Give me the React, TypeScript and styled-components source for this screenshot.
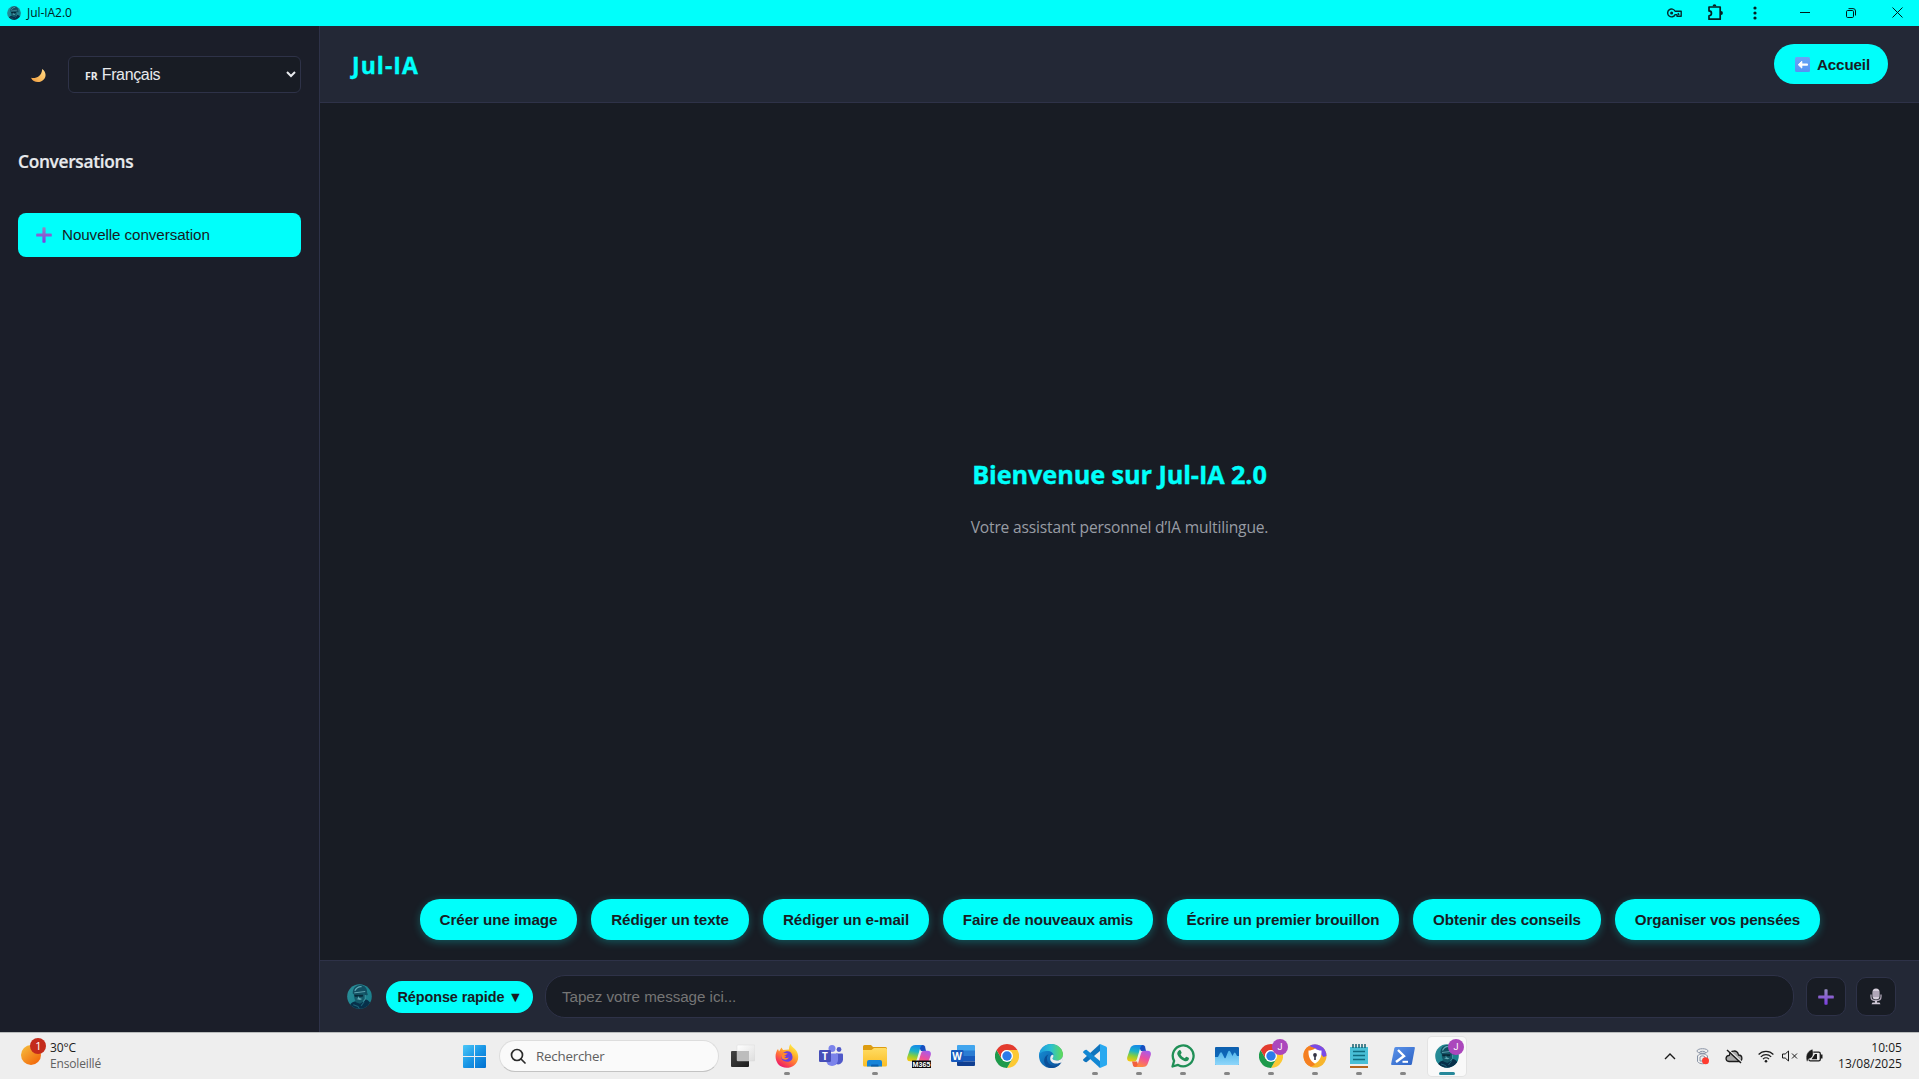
import React from "react";
import styled, { createGlobalStyle } from "styled-components";

const CYAN = "#00fffb";
const INK = "#181c24";
const PANEL = "#232836";
const SIDE = "#1b1e29";
const LINE = "#2e3248";
const UI = '"Open Sans", "Noto Sans", sans-serif';
const ARIAL = '"Liberation Sans", Arial, sans-serif';

const Global = createGlobalStyle`
  * { box-sizing: border-box; }
  html, body { margin: 0; padding: 0; background: ${INK}; overflow: hidden; }
  svg { display: block; flex: none; }
  button { font: inherit; border: 0; margin: 0; padding: 0; cursor: pointer; }
`;

const Txt = styled.span<{ $size: number; $w?: number; $ls?: number; $c?: string; $arial?: boolean }>`
  font-family: ${(p) => (p.$arial ? ARIAL : UI)};
  font-size: ${(p) => p.$size}px;
  font-weight: ${(p) => p.$w ?? 400};
  letter-spacing: ${(p) => p.$ls ?? 0}px;
  color: ${(p) => p.$c ?? "#111"};
  white-space: nowrap;
`;

const Screen = styled.div`
  width: 1919px;
  height: 1079px;
  display: flex;
  flex-direction: column;
  background: ${INK};
`;

const TitleBar = styled.header`
  height: 26px;
  flex: none;
  display: flex;
  align-items: center;
  justify-content: space-between;
  background: ${CYAN};
  padding: 0 16px 1px 7px;
`;
const TitleLeft = styled.div`
  display: flex;
  align-items: center;
  gap: 6px;
`;
const TitleIcons = styled.div`
  display: flex;
  align-items: center;
`;
const TitleIcon = styled.div<{ $ml: number }>`
  margin-left: ${(p) => p.$ml}px;
`;

const Body = styled.div`
  height: 1006px;
  flex: none;
  display: flex;
`;

const Sidebar = styled.aside`
  width: 320px;
  flex: none;
  background: ${SIDE};
  border-right: 1px solid ${LINE};
  padding: 30px 18px 0;
  display: flex;
  flex-direction: column;
`;
const TopRow = styled.div`
  display: flex;
  align-items: center;
  height: 37px;
  padding-left: 12px;
  gap: 21px;
`;
const Select = styled.div`
  flex: 1;
  height: 37px;
  display: flex;
  align-items: center;
  background: ${INK};
  border: 1px solid ${LINE};
  border-radius: 6px;
  padding: 0 4px 0 16px;
`;
const SelectLabel = styled.div`
  flex: 1;
  display: flex;
  align-items: baseline;
  gap: 4px;
`;
const SideTitle = styled.h3`
  margin: 57px 0 0;
  height: 24px;
  font: 600 17.3px/24px ${UI};
  letter-spacing: -0.3px;
  color: #e8eaed;
  -webkit-text-stroke: 0.2px #e8eaed;
`;
const NewButton = styled.button`
  margin-top: 39px;
  height: 44px;
  border-radius: 8px;
  background: ${CYAN};
  display: flex;
  align-items: center;
  gap: 10px;
  padding-left: 18px;
  > span { padding-bottom: 2px; }
`;

const Main = styled.main`
  flex: 1;
  display: flex;
  flex-direction: column;
`;
const Header = styled.div`
  height: 77px;
  flex: none;
  background: ${PANEL};
  border-bottom: 1px solid ${LINE};
  display: flex;
  align-items: center;
  justify-content: space-between;
  padding: 0 31px 0 32px;
`;
const Brand = styled.h1`
  margin: 2px 0 0;
  font: 700 23px/30px ${UI};
  letter-spacing: 1.05px;
  color: ${CYAN};
  -webkit-text-stroke: 0.35px ${CYAN};
`;
const HomeButton = styled.button`
  width: 114px;
  height: 40px;
  border-radius: 20px;
  background: ${CYAN};
  display: flex;
  align-items: center;
  padding-left: 21px;
  gap: 7px;
`;
const Welcome = styled.section`
  flex: 1;
  display: flex;
  flex-direction: column;
  align-items: center;
  padding-top: 352px;
`;
const WelcomeTitle = styled.h2`
  margin: 0;
  font: 700 25.3px/38px ${UI};
  letter-spacing: -0.1px;
  color: ${CYAN};
  -webkit-text-stroke: 0.35px ${CYAN};
  white-space: nowrap;
`;
const WelcomeText = styled.p`
  margin: 22px 0 0;
  font: 400 15.6px/24px ${UI};
  letter-spacing: -0.18px;
  color: #989ca4;
  white-space: nowrap;
`;
const Chips = styled.div`
  height: 61px;
  display: flex;
  justify-content: center;
  gap: 14px;
`;
const Chip = styled.button<{ $width: number }>`
  width: ${(p) => p.$width}px;
  height: 41px;
  border-radius: 20px;
  background: ${CYAN};
  box-shadow: 0 2px 8px rgba(0, 255, 251, 0.27);
  font: 700 15.2px/41px ${ARIAL};
  letter-spacing: -0.08px;
  padding-left: 1px;
  color: ${INK};
  white-space: nowrap;
`;
const Composer = styled.div`
  height: 72px;
  flex: none;
  background: ${PANEL};
  border-top: 1px solid ${LINE};
  display: flex;
  align-items: center;
  padding: 0 23px 0 27px;
`;
const ModeButton = styled.button`
  width: 147px;
  height: 32px;
  margin: 1px 12px 0 14px;
  border-radius: 16px;
  background: ${CYAN};
  font: 700 14.4px/31px ${ARIAL};
  letter-spacing: -0.08px;
  padding-left: 1px;
  color: ${INK};
  white-space: nowrap;
`;
const Input = styled.div`
  flex: 1;
  height: 43px;
  border: 1px solid ${LINE};
  border-radius: 20px;
  background: ${INK};
  padding-left: 16px;
  font: 400 15.2px/41px ${ARIAL};
  letter-spacing: -0.05px;
  color: #757575;
`;
const SquareButton = styled.button<{ $ml: number }>`
  width: 40px;
  height: 39px;
  margin-left: ${(p) => p.$ml}px;
  border: 1px solid ${LINE};
  border-radius: 10px;
  background: ${INK};
  display: flex;
  align-items: center;
  justify-content: center;
`;

const TaskBar = styled.footer`
  height: 47px;
  flex: none;
  background: #eeeeee;
  border-top: 1px solid #b9bcbc;
  display: flex;
  align-items: flex-start;
`;
const Weather = styled.div`
  width: 463px;
  display: flex;
  padding: 4px 0 0 20px;
  gap: 4px;
`;
const WeatherText = styled.div`
  display: flex;
  flex-direction: column;
  padding-top: 3px;
  > span { line-height: 16px; }
`;
const StartCell = styled.div`
  padding-top: 12px;
  width: 36px;
`;
const Search = styled.div`
  width: 220px;
  height: 32px;
  margin-top: 7px;
  border: 1px solid #dddddd;
  border-bottom-color: #c3c3c3;
  border-radius: 16px;
  background: #fafafa;
  display: flex;
  align-items: center;
  padding-left: 10px;
  gap: 10px;
`;
const Apps = styled.div`
  display: flex;
  padding: 4px 0 0 2px;
`;
const AppCell = styled.div<{ $active?: boolean }>`
  width: 38px;
  height: 39px;
  margin: 0 3px;
  position: relative;
  display: flex;
  flex-direction: column;
  align-items: center;
  padding-top: 7px;
  border-radius: 4px;
  background: ${(p) => (p.$active ? "#f9f9f9" : "transparent")};
  box-shadow: ${(p) => (p.$active ? "0 0 0 1px #e3e3e3" : "none")};
`;
const Running = styled.i<{ $active?: boolean }>`
  width: ${(p) => (p.$active ? 16 : 6)}px;
  height: 3px;
  margin-top: 4px;
  border-radius: 2px;
  background: ${(p) => (p.$active ? "#26889a" : "#858585")};
`;
const Profile = styled.span`
  position: absolute;
  top: 2px;
  right: 2px;
  width: 16px;
  height: 16px;
  border-radius: 8px;
  background: #ab47bc;
  color: #fff;
  font: 400 9px/16px "Roboto", sans-serif;
  text-align: center;
`;
const Tray = styled.div`
  flex: 1;
  height: 46px;
  display: flex;
  align-items: center;
  justify-content: flex-end;
  padding-right: 17px;
`;
const TrayIcon = styled.div<{ $mr: number }>`
  margin-right: ${(p) => p.$mr}px;
`;
const Clock = styled.div`
  width: 79px;
  display: flex;
  flex-direction: column;
  align-items: flex-end;
  > span { line-height: 16px; }
`;

/* ---------- drawings ---------- */

const Avatar = ({ size, id }: { size: number; id: string }) => (
  <svg width={size} height={size} viewBox="0 0 24 24">
    <defs>
      <linearGradient id={id} x1="0" y1="0" x2="1" y2=".6">
        <stop offset="0" stopColor="#2d8e98" />
        <stop offset=".5" stopColor="#1f8793" />
        <stop offset="1" stopColor="#1b7f8c" />
      </linearGradient>
      <clipPath id={id + "c"}><circle cx="12" cy="12" r="11.800" /></clipPath>
    </defs>
    <g clipPath={`url(#${id}c)`}>
      <rect width="24" height="24" fill={`url(#${id})`} />
      <path d="M2 24c0-4 2-6.500 6-7.500l4.500 1.500 4-3.500c4 .5 6.500 3 8 9.500z" fill="#07304a" />
      <path d="M6.500 9l11-1 .5 4-1.500 4.500-4 2.500-4-1.500-1.500-4z" fill="#155a6a" />
      <path d="M5.500 9C5.500 3.500 9 .8 13 1c4 .2 6.500 3 6.300 7l.7 2.500-2.500.5-.5-2.500-10 1.500z" fill="#124f62" />
      <path d="M7.500 6.500C9 3.500 11.500 2.300 14 2.500" fill="none" stroke="#5fa9b5" strokeWidth="1.200" />
      <path d="M7 8.500l10.500-1.300" stroke="#6fb4bf" strokeWidth=".8" />
      <path d="M7 10.200h8.500l-.5 2h-3l-1-1-1 1H7.500z" fill="#072838" />
      <path d="M9 14.500l3-1 2.500 1-2 .8zM10.800 12l1.200 1.500-1.500.3z" fill="#63aab5" />
      <path d="M17.500 10.500v4l-2 2.500" fill="none" stroke="#3e97a4" strokeWidth="1" />
      <path d="M6 20l4.500 1.500L12 24M16.500 17l-3 4" fill="none" stroke="#1d6478" strokeWidth="1" />
    </g>
  </svg>
);

const Plus = ({ size, id }: { size: number; id: string }) => (
  <svg width={size} height={size} viewBox="0 0 16 16">
    <defs>
      <linearGradient id={id} x1="0" y1="0" x2="0" y2="1">
        <stop offset="0" stopColor="#938bbd" />
        <stop offset=".5" stopColor="#8a5fd0" />
        <stop offset="1" stopColor="#7a3fe0" />
      </linearGradient>
    </defs>
    <path d="M6.400 1q0-.8.7-.8h1.800q.7 0 .7.8v5.400H15q.8 0 .8.7v1.800q0 .7-.8.7H9.600V15q0 .8-.7.8H7.100q-.7 0-.7-.8V9.600H1q-.8 0-.8-.7V7.100q0-.7.8-.7h5.400z" fill={`url(#${id})`} />
  </svg>
);

const Moon = () => (
  <svg width="17" height="17" viewBox="0 -2 17 17">
    <defs>
      <linearGradient id="moon" x1="0" y1="1" x2="1" y2="0">
        <stop offset="0" stopColor="#f09a3e" />
        <stop offset=".6" stopColor="#fbc468" />
        <stop offset="1" stopColor="#ffd98a" />
      </linearGradient>
    </defs>
    <path d="M12.200 1c5 3.500 4.300 10.300-1.200 12.500-3.800 1.400-8.300.3-10-3.700 4.200 1.200 10.800-1 11.200-8.800z" fill="url(#moon)" />
  </svg>
);

const Mic = () => (
  <svg width="12" height="17" viewBox="0 0 12 17">
    <rect x="2.500" y=".5" width="7" height="11" rx="3.500" fill="#d6cfdc" />
    <path d="M3 4h6M3 6h6M3 8h6" stroke="#84778f" strokeWidth=".9" />
    <path d="M1 6.500v2.300c0 5.300 10 5.300 10 0V6.500" fill="none" stroke="#b0a7b8" strokeWidth="1.300" />
    <path d="M5 12.500h2v2h2.500l1 1.800h-9l1-1.800H5z" fill="#cfc8d6" />
  </svg>
);

const ArrowEmoji = () => (
  <svg width="15" height="15" viewBox="0 0 15 15">
    <defs>
      <linearGradient id="arrow" x1="0" y1="0" x2="0" y2="1">
        <stop offset="0" stopColor="#6ba6f5" />
        <stop offset="1" stopColor="#5493f3" />
      </linearGradient>
    </defs>
    <rect width="15" height="15" rx="1.500" fill="url(#arrow)" />
    <path d="M6.800 4.300L3.200 7.700l3.600 3.400z" fill="#fff" stroke="#fff" strokeWidth="1" strokeLinejoin="round" />
    <path d="M6 7.700h6" stroke="#fff" strokeWidth="2.200" strokeLinecap="round" />
  </svg>
);

const KeyIcon = () => (
  <svg width="15" height="10" viewBox="0 0 15 10" fill="none" stroke="#06292b" strokeWidth="1.400">
    <path d="M8.100 3.300A3.900 3.900 0 1 0 8.100 6.600H10V8.300h4.200V3.300z" strokeLinejoin="round" />
    <circle cx="4.600" cy="5" r="1.500" fill="#06292b" stroke="none" />
    <path d="M11 5l1 2" />
  </svg>
);
const Puzzle = () => (
  <svg width="17" height="17" viewBox="0 0 17 17">
    <path d="M2 3h11.200v12.200H2v-3.400a2.400 2.400 0 0 0 0-4.900z" fill="none" stroke="#062022" strokeWidth="1.700" strokeLinejoin="round" />
    <path d="M5.600 2.200a1.900 1.900 0 0 1 3.800 0zM14 7.100a1.900 1.900 0 0 1 0 3.800z" fill="#062022" />
  </svg>
);
const Dots = () => (
  <svg width="4" height="14" viewBox="0 0 4 14" fill="#062022">
    <circle cx="2" cy="2" r="1.600" /><circle cx="2" cy="7" r="1.600" /><circle cx="2" cy="12" r="1.600" />
  </svg>
);
const Minimize = () => (
  <svg width="10" height="10" viewBox="0 0 10 10"><path d="M0 4.500h10" stroke="#001a18" /></svg>
);
const Restore = () => (
  <svg width="10" height="10" viewBox="0 0 10 10" fill="none" stroke="#001a18">
    <rect x=".5" y="2.500" width="7" height="7" rx="1.200" /><path d="M2.500.6H7q2.500 0 2.500 2.400v4.500" />
  </svg>
);
const Close = () => (
  <svg width="11" height="11" viewBox="0 0 11 11"><path d="M.5.5l10 10M10.500.5l-10 10" stroke="#001a18" /></svg>
);

const Sun = () => (
  <svg width="26" height="28" viewBox="0 0 26 28">
    <defs>
      <linearGradient id="sun" x1=".1" y1=".1" x2=".8" y2=".9">
        <stop offset="0" stopColor="#f5b83a" /><stop offset="1" stopColor="#f26a0c" />
      </linearGradient>
    </defs>
    <circle cx="11" cy="18" r="10" fill="url(#sun)" />
    <circle cx="18" cy="9" r="8" fill="#c42b1c" />
    <text x="18.500" y="13" fontSize="11" fill="#fff" textAnchor="middle" fontFamily="Open Sans, sans-serif">1</text>
  </svg>
);

const Win = () => (
  <svg width="23" height="23" viewBox="0 0 23 23">
    <defs>
      <linearGradient id="win" gradientUnits="userSpaceOnUse" x1="0" y1="0" x2="23" y2="23">
        <stop offset="0" stopColor="#4cc8f8" /><stop offset=".5" stopColor="#1996e6" /><stop offset="1" stopColor="#0070d0" />
      </linearGradient>
    </defs>
    <path d="M1 0h10v11H0V1q0-1 1-1zM12 0h10q1 0 1 1v10H12zM0 12h11v11H1q-1 0-1-1zM12 12h11v10q0 1-1 1H12z" fill="url(#win)" />
  </svg>
);
const Glass = () => (
  <svg width="16" height="16" viewBox="0 0 16 16" fill="none" stroke="#2b2b2b" strokeWidth="1.700">
    <circle cx="7" cy="7" r="5.500" /><path d="M11 11l4 4" strokeLinecap="round" />
  </svg>
);

const TaskView = () => (
  <svg width="24" height="24" viewBox="0 0 24 24">
    <defs>
      <linearGradient id="tv" x1="0" y1="0" x2="1" y2="1"><stop offset="0" stopColor="#444" /><stop offset="1" stopColor="#1c1c1c" /></linearGradient>
      <linearGradient id="tv2" x1="0" y1="0" x2="1" y2="1"><stop offset="0" stopColor="#fff" /><stop offset="1" stopColor="#ddd" /></linearGradient>
    </defs>
    <rect x="0" y="7" width="18" height="16" rx="1" fill="url(#tv)" />
    <rect x="6" y="1" width="18" height="16" rx="1" fill="url(#tv2)" stroke="#d5d5d5" strokeWidth=".4" />
    <path d="M6 7h12v10H6z" fill="#bdbdbd" />
  </svg>
);
const Firefox = () => (
  <svg width="24" height="24" viewBox="0 0 24 24">
    <defs>
      <linearGradient id="ff" x1=".8" y1=".05" x2=".25" y2=".95">
        <stop offset="0" stopColor="#fff04a" /><stop offset=".35" stopColor="#ffb02a" /><stop offset=".65" stopColor="#ff6a3c" /><stop offset="1" stopColor="#ee1a6a" />
      </linearGradient>
    </defs>
    <path d="M15.500 0c1 3 4 4 6 7 3 5 2 11-2.500 14.500-5 3.500-12 3-16-1.500C-.3 15.500-.2 9 3 5l1 2.500L6.500 3.500 8 6c2 0 4-.5 6-.5 0-2 .3-4 1.500-5.500z" fill="url(#ff)" />
    <path d="M8 9c4-3 9-2 9.500 3.500S12 18.500 9 17c-2-1-3-2.500-2.800-4.500 1.500 1.300 4 1.300 5-.5-1.500-.2-3-.7-4-1.500z" fill="#6a3fe0" />
    <path d="M7.500 8.500c1.600.3 3 .8 5.300.8-1 2-3.500 1.500-4 3 1 2.500 4 2 5 1-.5 2.500-4.500 3.500-7.300.7z" fill="#ff8a2b" />
  </svg>
);
const Teams = () => (
  <svg width="24" height="24" viewBox="0 0 24 24">
    <circle cx="13" cy="4.500" r="3.500" fill="#7b83eb" /><circle cx="20" cy="5.500" r="2.400" fill="#5059c9" />
    <path d="M17 9.500h6q1 0 1 1v5.500a5 5 0 0 1-7 4z" fill="#5059c9" />
    <path d="M7 9.500h11q1 0 1 1V16a6 6 0 0 1-12 0z" fill="#7b83eb" />
    <rect x="0" y="6" width="12" height="12" rx="1.200" fill="#464eb8" />
    <text x="6" y="15.500" fontSize="10" fontWeight="700" fill="#fff" textAnchor="middle" fontFamily="Open Sans, sans-serif">T</text>
  </svg>
);
const Folder = () => (
  <svg width="24" height="24" viewBox="0 0 24 24">
    <defs>
      <linearGradient id="fo" x1="0" y1="0" x2="0" y2="1"><stop offset="0" stopColor="#ffdc63" /><stop offset="1" stopColor="#fbbd25" /></linearGradient>
    </defs>
    <path d="M0 2.500Q0 1 1.500 1H8l2 2h12.500Q24 3 24 4.500V9H0z" fill="#dd9c10" />
    <path d="M0 6h8.500L11 4h11.500Q24 4 24 5.500V21q0 1.500-1.500 1.500h-21Q0 22.500 0 21z" fill="url(#fo)" />
    <path d="M4 22.500V18q0-2 2-2h11q2 0 2 2v4.500z" fill="#1684d8" /><path d="M8 22.500v-1q0-1 1-1h5.500q1 0 1 1v1z" fill="#0a5eae" />
  </svg>
);
const CopilotShape = ({ id }: { id: string }) => (
  <>
    <defs>
      <linearGradient id={id + "a"} x1=".4" y1="0" x2=".2" y2="1">
        <stop offset="0" stopColor="#168be6" /><stop offset=".35" stopColor="#1ab3c8" /><stop offset=".65" stopColor="#8bcf3a" /><stop offset="1" stopColor="#ffc60a" />
      </linearGradient>
      <linearGradient id={id + "b"} x1=".8" y1="0" x2=".4" y2="1">
        <stop offset="0" stopColor="#a35cf0" /><stop offset=".5" stopColor="#ee4f9c" /><stop offset="1" stopColor="#ff8a3c" />
      </linearGradient>
    </defs>
    <path d="M16 1q1.500 0 2 1.500L19 7h-5l-3-6z" fill="#174fc0" />
    <path d="M8.500 1H16c-1.500 0-2.200 1-2.600 2.300L10 15c-.5 1.700-1.500 2.500-3 2.500H3.500C.8 17.500-.4 15.800.3 13L3 5c1-3 2.700-4 5.500-4z" fill={`url(#${id}a)`} />
    <path d="M8 23q-1.500 0-2-1.500L5 17.500h5l2 5.500z" fill="#f2603c" />
    <path d="M15.500 23H8c1.500 0 2.200-1 2.600-2.300L14 9.300c.5-1.700 1.500-2.500 3-2.500h3.500c2.700 0 3.900 1.700 3.200 4.500L21 19c-1 3-2.700 4-5.500 4z" fill={`url(#${id}b)`} />
  </>
);
const Copilot = () => (
  <svg width="24" height="24" viewBox="0 0 24 24"><CopilotShape id="cp" /></svg>
);
const M365 = () => (
  <svg width="24" height="24" viewBox="0 0 24 24">
    <CopilotShape id="cm" />
    <path d="M0 17.500h24V24H0z" fill="#eee" />
    <rect x="5" y="16.500" width="19" height="7.500" fill="#0a0a0a" />
    <text x="14.500" y="22.900" fontSize="7.200" fontWeight="700" fill="#fff" textAnchor="middle" fontFamily="Liberation Sans, sans-serif">M365</text>
  </svg>
);
const Word = () => (
  <svg width="24" height="24" viewBox="0 0 24 24">
    <path d="M7 1h16q1 0 1 1v5H6V2q0-1 1-1z" fill="#41a5ee" /><path d="M6 6.500h18V12H6z" fill="#2b7cd3" />
    <path d="M6 12h18v5.500H6z" fill="#185abd" /><path d="M6 17.500h18V21q0 1-1 1H7q-1 0-1-1z" fill="#103f91" />
    <rect x="0" y="6" width="12.500" height="12" rx="1.200" fill="#185abd" />
    <text x="6.200" y="15.500" fontSize="10" fontWeight="700" fill="#fff" textAnchor="middle" fontFamily="Open Sans, sans-serif">W</text>
  </svg>
);
const Chrome = () => (
  <svg width="24" height="24" viewBox="0 0 24 24">
    <path d="M12 6h10.400A12 12 0 0 1 12 24l5.200-9z" fill="#fcc934" />
    <path d="M6.800 15L1.600 6A12 12 0 0 0 12 24l5.200-9z" fill="#1e9a4b" />
    <path d="M12 0A12 12 0 0 1 22.400 6H12a6 6 0 0 0-5.200 9L1.600 6A12 12 0 0 1 12 0z" fill="#e33b2e" />
    <circle cx="12" cy="12" r="6" fill="#fff" /><circle cx="12" cy="12" r="4.700" fill="#2b7bea" />
  </svg>
);
const Edge = () => (
  <svg width="24" height="24" viewBox="0 0 24 24">
    <defs>
      <linearGradient id="ed" x1="0" y1=".4" x2="1" y2=".4"><stop offset="0" stopColor="#1b9ae0" /><stop offset=".5" stopColor="#2cc0d0" /><stop offset="1" stopColor="#62dc52" /></linearGradient>
      <linearGradient id="ed2" x1="0" y1="0" x2="1" y2="1"><stop offset="0" stopColor="#1795dc" /><stop offset="1" stopColor="#0b4a94" /></linearGradient>
    </defs>
    <circle cx="12" cy="12" r="12" fill="url(#ed2)" />
    <path d="M0 11C1 4.500 6 0 12 0c7 0 12 5 12 10.500 0 3.500-2.500 6-6 6-2.500 0-4.500-.7-4.500-2 0-.8 1-1.300 1-3 0-2.500-2.500-4.500-6-4.500C4.500 7 1 8.500 0 11z" fill="url(#ed)" />
    <path d="M13.500 14.500c0 1.300 2 2 4.500 2 3.500 0 6-2.500 6-6v4c0 1-.5 2.500-1.200 3.500-2 1.300-5.500 2-8 1.200-3-1-4.500-4-3-7.200 1-1.700 2.700-1.700 2.700-.3 0 1.500-1 2-1 2.800z" fill="#eee" />
    <path d="M9.500 10.500C7 13 7.500 18 11 20.500s8.500 1.500 11.500-2C20.500 22 16.500 24 12 24c-5-.5-8-5-6.500-9.500.7-2 2-3.500 4-4z" fill="#0b4f98" />
  </svg>
);
const VsCode = () => (
  <svg width="24" height="24" viewBox="0 0 24 24">
    <path d="M17 0v7L3.500 18.300 2 18 .3 16.400q-.5-.6 0-1.200z" fill="#0f74bd" />
    <path d="M17 24v-7L3.500 5.700 2 6 .3 7.600q-.5.600 0 1.200z" fill="#1287d3" />
    <path d="M17 0l6 2.500q1 .5 1 1.500v16q0 1-1 1.500L17 24q-1 .3-1.600-.5 1.600 1 1.600-.5V1q0-1.500-1.600-.5Q16-.3 17 0z" fill="#29a9f0" />
  </svg>
);
const WhatsApp = () => (
  <svg width="24" height="24" viewBox="0 0 24 24">
    <path d="M1.500 22.500l1.600-5.600a10.400 10.400 0 1 1 4 4z" fill="none" stroke="#1f8f56" strokeWidth="2.300" strokeLinejoin="round" />
    <path d="M8.200 6.200c.6-.4 1.200-.2 1.500.4l.9 2c.2.500-.7 1.500-1 1.800.9 1.700 2.300 3 4.100 3.800.4-.3 1.200-1.700 1.800-1.500l2.200 1.100c.5.400.2 1.700-.4 2.500-.9.900-2.400 1.200-4 .6-3.200-1-6.100-3.900-7-6.600-.4-1.600.6-3.300 1.900-4.100z" fill="#1f8f56" />
  </svg>
);
const Monitor = () => (
  <svg width="24" height="24" viewBox="0 0 24 24">
    <defs><linearGradient id="mo" x1="0" y1="0" x2="0" y2="1"><stop offset="0" stopColor="#0d5fae" /><stop offset="1" stopColor="#0d6fc4" /></linearGradient>
      <linearGradient id="mo2" x1="0" y1="0" x2="0" y2="1"><stop offset="0" stopColor="#4fb4ea" /><stop offset="1" stopColor="#8fd6fa" /></linearGradient></defs>
    <rect y="3" width="24" height="18" rx="1" fill="url(#mo)" />
    <path d="M0 13h3l2-4q1.500-2 2.500 1l2 4q1 1 1.500-1l2-5q1-2.500 2.500 0l2 4 1.500-3q1-1.500 2 1l1 2H24v8q0 1-1 1H1q-1 0-1-1z" fill="url(#mo2)" />
  </svg>
);
const Shield = () => (
  <svg width="24" height="24" viewBox="0 0 24 24">
    <circle cx="12" cy="12" r="11.500" fill="#f7b52c" />
    <path d="M6 2.100A11.500 11.500 0 0 1 23.500 12l-3 1L14 6z" fill="#7a4be8" />
    <path d="M6 2.100A11.500 11.500 0 0 0 8 22.800l4-2L6 12l2-6 6-1z" fill="#f57f22" />
    <path d="M12 4.500c2 1.500 4 2 6.500 2 .3 6-1.500 10.500-6.500 13-5-2.500-6.800-7-6.500-13 2.500 0 4.500-.5 6.500-2z" fill="#fff" />
    <circle cx="12" cy="11" r="1.900" fill="#334" /><path d="M11.200 11h1.600v5h-1.600z" fill="#334" />
  </svg>
);
const Notes = () => (
  <svg width="24" height="24" viewBox="0 0 24 24">
    <path d="M3 3h18v17H3z" fill="#49bfd6" /><path d="M3 20h18v1.500H3z" fill="#eee" /><path d="M3 22h18v2H3z" fill="#b5651d" />
    <path d="M6 0v4M9 0v4M12 0v4M15 0v4M18 0v4" stroke="#17606f" strokeWidth="1.500" />
    <path d="M6 7.500h12M6 11.500h12M6 15.500h12" stroke="#0f6c80" strokeWidth="1.500" />
  </svg>
);
const PowerShell = () => (
  <svg width="24" height="24" viewBox="0 0 24 24">
    <defs><linearGradient id="ps" x1="0" y1="0" x2="1" y2="1"><stop offset="0" stopColor="#5b93ea" /><stop offset="1" stopColor="#2c62c4" /></linearGradient></defs>
    <path d="M5 3h18q1 0 .9 1l-3 16q-.2 1-1.200 1H1q-1 0-.9-1l3.300-16Q3.800 3 5 3z" fill="url(#ps)" />
    <path d="M7 6l6 6-8 6" fill="none" stroke="#fff" strokeWidth="2.400" /><path d="M11.500 17.800H17" stroke="#fff" strokeWidth="2" />
  </svg>
);

const Chevron = () => (
  <svg width="12" height="8" viewBox="0 0 12 8"><path d="M1 7l5-5 5 5" fill="none" stroke="#1b1b1b" strokeWidth="1.400" /></svg>
);
const Recorder = () => (
  <svg width="14" height="17" viewBox="0 0 14 17" fill="none" stroke="#8a94a6">
    <ellipse cx="6.500" cy="3" rx="5.500" ry="2.300" /><ellipse cx="6.500" cy="4.500" rx="3" ry="1.200" />
    <path d="M1.500 8c2-3 8-3 10 0v5.500c-2 3-8 3-10 0z" /><path d="M4 9c1-1.500 4-1.500 5 0v4H4z" />
    <circle cx="9.500" cy="12.800" r="3.500" fill="#ff3b30" stroke="none" />
  </svg>
);
const CloudOff = () => (
  <svg width="18" height="15" viewBox="0 0 18 15">
    <path d="M4 12.500c-4-.3-4-6 .3-6.200C5 .8 12.500.5 13.500 6c4.500.2 4.500 6.300 0 6.500z" fill="#a9a9a9" stroke="#1b1b1b" strokeWidth="1.300" />
    <path d="M3.500.8l13 12" stroke="#eee" strokeWidth="1.200" /><path d="M2 1l14 13" stroke="#1b1b1b" strokeWidth="1.400" />
  </svg>
);
const Wifi = () => (
  <svg width="16" height="13" viewBox="0 0 16 13" fill="none" stroke="#1b1b1b" strokeWidth="1.200">
    <path d="M.6 4.500c4-4.300 10.800-4.300 14.800 0M2.800 6.900c3-3 7.400-3 10.400 0M5 9.200c1.700-1.700 4.300-1.700 6 0" />
    <circle cx="8" cy="11.200" r="1.300" fill="#1b1b1b" stroke="none" />
  </svg>
);
const Muted = () => (
  <svg width="16" height="12" viewBox="0 0 16 12" fill="none" stroke="#1b1b1b">
    <path d="M.5 4h2.700L6.500 1v10L3.200 8H.5z" strokeLinejoin="round" /><path d="M10 3.500l5 5M15 3.500l-5 5" />
  </svg>
);
const Battery = () => (
  <svg width="17" height="14" viewBox="0 0 17 14">
    <rect x="2.700" y="3.200" width="11.600" height="8.600" rx="1.600" fill="none" stroke="#1b1b1b" strokeWidth="1.300" />
    <path d="M15 5.500h1.500v4H15z" fill="#1b1b1b" /><path d="M9 5h2v5.300H5.500z" fill="#1b1b1b" />
    <path d="M.5 12C-.8 5.500 1.500 2.500 6.500 0 8 5 7.300 9.300 2.500 10L1.500 12.500z" fill="#1b1b1b" stroke="#eee" strokeWidth=".5" />
  </svg>
);

const chips: [string, number][] = [
  ["Créer une image", 157],
  ["Rédiger un texte", 158],
  ["Rédiger un e-mail", 166],
  ["Faire de nouveaux amis", 210],
  ["Écrire un premier brouillon", 232],
  ["Obtenir des conseils", 188],
  ["Organiser vos pensées", 205],
];

type AppItem = { icon: React.ReactNode; run?: boolean; badge?: boolean; active?: boolean };
const apps: AppItem[] = [
  { icon: <TaskView /> },
  { icon: <Firefox />, run: true },
  { icon: <Teams /> },
  { icon: <Folder />, run: true },
  { icon: <M365 /> },
  { icon: <Word /> },
  { icon: <Chrome /> },
  { icon: <Edge /> },
  { icon: <VsCode />, run: true },
  { icon: <Copilot />, run: true },
  { icon: <WhatsApp />, run: true },
  { icon: <Monitor />, run: true },
  { icon: <Chrome />, run: true, badge: true },
  { icon: <Shield />, run: true },
  { icon: <Notes />, run: true },
  { icon: <PowerShell />, run: true },
  { icon: <Avatar size={24} id="avTask" />, run: true, badge: true, active: true },
];

export default function App() {
  return (
    <Screen>
      <Global />
      <TitleBar>
        <TitleLeft>
          <Avatar size={14} id="avTitle" />
          <Txt $size={12} $ls={-0.05} $c="#022">Jul-IA2.0</Txt>
        </TitleLeft>
        <TitleIcons>
          <TitleIcon $ml={0}><KeyIcon /></TitleIcon>
          <TitleIcon $ml={25}><Puzzle /></TitleIcon>
          <TitleIcon $ml={29}><Dots /></TitleIcon>
          <TitleIcon $ml={43}><Minimize /></TitleIcon>
          <TitleIcon $ml={36}><Restore /></TitleIcon>
          <TitleIcon $ml={36}><Close /></TitleIcon>
        </TitleIcons>
      </TitleBar>
      <Body>
        <Sidebar>
          <TopRow>
            <Moon />
            <Select>
              <SelectLabel>
                <Txt $size={10.5} $w={700} $c="#e8eaed">FR</Txt>
                <Txt $arial $size={16} $ls={-0.35} $c="#e8eaed">Français</Txt>
              </SelectLabel>
              <svg width="10" height="7" viewBox="0 0 10 7"><path d="M1 1l4 4 4-4" fill="none" stroke="#e8eaed" strokeWidth="2" /></svg>
            </Select>
          </TopRow>
          <SideTitle>Conversations</SideTitle>
          <NewButton>
            <Plus size={16} id="plusNew" />
            <Txt $arial $size={15.2} $ls={-0.08} $c={INK}>Nouvelle conversation</Txt>
          </NewButton>
        </Sidebar>
        <Main>
          <Header>
            <Brand>Jul-IA</Brand>
            <HomeButton>
              <ArrowEmoji />
              <Txt $arial $size={15.2} $ls={-0.15} $w={700} $c={INK}>Accueil</Txt>
            </HomeButton>
          </Header>
          <Welcome>
            <WelcomeTitle>Bienvenue sur Jul-IA 2.0</WelcomeTitle>
            <WelcomeText>Votre assistant personnel d’IA multilingue.</WelcomeText>
          </Welcome>
          <Chips>
            {chips.map(([label, width]) => (
              <Chip key={label} $width={width}>{label}</Chip>
            ))}
          </Chips>
          <Composer>
            <Avatar size={25} id="avComposer" />
            <ModeButton>Réponse rapide ▼</ModeButton>
            <Input>Tapez votre message ici...</Input>
            <SquareButton $ml={12}><Plus size={16} id="plusAttach" /></SquareButton>
            <SquareButton $ml={10}><Mic /></SquareButton>
          </Composer>
        </Main>
      </Body>
      <TaskBar>
        <Weather>
          <Sun />
          <WeatherText>
            <Txt $size={12} $ls={-0.15} $c="#1b1b1b">30°C</Txt>
            <Txt $size={12} $ls={-0.15} $c="#606060">Ensoleillé</Txt>
          </WeatherText>
        </Weather>
        <StartCell><Win /></StartCell>
        <Search>
          <Glass />
          <Txt $size={13.3} $ls={-0.2} $c="#606060">Rechercher</Txt>
        </Search>
        <Apps>
          {apps.map((a, i) => (
            <AppCell key={i} $active={a.active}>
              {a.icon}
              {a.run && <Running $active={a.active} />}
              {a.badge && <Profile>J</Profile>}
            </AppCell>
          ))}
        </Apps>
        <Tray>
          <TrayIcon $mr={20}><Chevron /></TrayIcon>
          <TrayIcon $mr={15}><Recorder /></TrayIcon>
          <TrayIcon $mr={15}><CloudOff /></TrayIcon>
          <TrayIcon $mr={8}><Wifi /></TrayIcon>
          <TrayIcon $mr={8}><Muted /></TrayIcon>
          <TrayIcon $mr={0}><Battery /></TrayIcon>
          <Clock>
            <Txt $size={12} $ls={0.02} $c="#1b1b1b">10:05</Txt>
            <Txt $size={12} $ls={0.02} $c="#1b1b1b">13/08/2025</Txt>
          </Clock>
        </Tray>
      </TaskBar>
    </Screen>
  );
}
